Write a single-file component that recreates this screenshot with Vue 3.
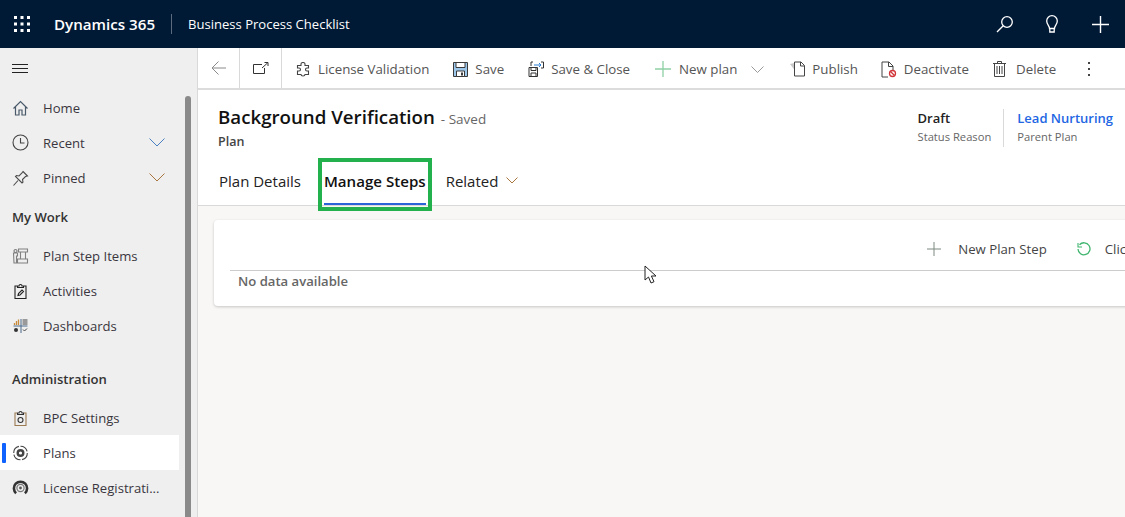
<script setup>
const dots = [[0,0],[6.5,0],[13,0],[0,6.5],[6.5,6.5],[13,6.5],[0,13],[6.5,13],[13,13]]
</script>

<template>
  <div class="app">
    <header class="top">
      <svg class="waffle" width="16" height="16" viewBox="0 0 16 16" fill="#fff">
        <rect v-for="p in dots" :key="p.join()" :x="p[0]" :y="p[1]" width="3" height="3" />
      </svg>
      <span class="brand">Dynamics 365</span>
      <span class="topsep"></span>
      <span class="appname">Business Process Checklist</span>
      <span class="grow"></span>
      <svg class="ti" width="18" height="18" viewBox="0 0 18 18" fill="none" stroke="#fff" stroke-width="1.3"><circle cx="11" cy="7" r="5.3" /><path d="M7.2 10.8 1 17" /></svg>
      <svg class="ti t2" width="18" height="20" viewBox="0 0 18 20" fill="none" stroke="#fff" stroke-width="1.3"><path d="M6.500 14.500c0-3-2.800-4-2.800-7.500a5.300 5.300 0 0 1 10.600 0c0 3.500-2.800 4.500-2.800 7.500z" /><path d="M6.800 14.500v3.500h4.400v-3.500" /></svg>
      <svg class="ti t3" width="17" height="17" viewBox="0 0 17 17" stroke="#fff" stroke-width="1.4"><path d="M8.500 0v17M0 8.500h17" /></svg>
    </header>

    <div class="main">
      <aside class="side">
        <div class="burger"><svg width="16" height="10" viewBox="0 0 16 10" stroke="#222" stroke-width="1"><path d="M0 .5h16M0 4.500h16M0 8.500h16" /></svg></div>
        <nav class="nav">
          <div class="row">
            <svg class="ni" width="16" height="16" viewBox="0 0 16 16" fill="none" stroke="#4a5a6a" stroke-width="1.200"><path d="M1 8.500 8 1.500l7 7M3 6.500V15h3.500v-5h3v5H13V6.500" /></svg>
            <span>Home</span>
          </div>
          <div class="row">
            <svg class="ni" width="17" height="17" viewBox="0 0 17 17" fill="none" stroke="#444" stroke-width="1.100"><circle cx="8.500" cy="8.500" r="7.500" /><path d="M8.500 4v5h4" /></svg>
            <span class="lbl">Recent</span>
            <svg class="chev" width="16" height="9" viewBox="0 0 16 9" fill="none" stroke="#4a7fc1" stroke-width="1"><path d="M.5.500 8 8l7.500-7.500" /></svg>
          </div>
          <div class="row">
            <svg class="ni" width="16" height="16" viewBox="0 0 16 16" fill="none" stroke="#4a4a4a" stroke-width="1.100"><path d="M10.500 1.500 15 6l-2 .500-3 3 .500 2.500-1 1-6.500-6.500 1-1 2.500.500 3-3zM5.500 10.500 1 15.500" /></svg>
            <span class="lbl">Pinned</span>
            <svg class="chev" width="16" height="9" viewBox="0 0 16 9" fill="none" stroke="#a8763e" stroke-width="1"><path d="M.5.500 8 8l7.500-7.500" /></svg>
          </div>

          <div class="head h1">My Work</div>
          <div class="row">
            <svg class="ni" width="16" height="16" viewBox="0 0 16 16" fill="none" stroke="#808080" stroke-width="1.100"><path d="M6 1h9v3H6zM8 4v7M13 4v7M5 11h10v4H5zM3 1.500a1.500 1.500 0 1 0 .01 0M1 5h4v3H4v7H1.500z" /></svg>
            <span>Plan Step Items</span>
          </div>
          <div class="row">
            <svg class="ni" width="16" height="16" viewBox="0 0 16 16" fill="none" stroke="#222" stroke-width="1.100"><path d="M4.500 3H2.500v12.500h11V3h-2M5 4.500V3h1.500a1.500 1.500 0 0 1 3 0H11v1.500zM5.500 12.500l.500-2 3.500-3.500 1.500 1.500-3.500 3.500z" /></svg>
            <span>Activities</span>
          </div>
          <div class="row">
            <svg class="ni" width="16" height="16" viewBox="0 0 16 16" fill="none" stroke-width="1">
              <path d="M1 8h14M8.500 1v14" stroke="#4a6a8a" />
              <path d="M2 7V5M4 7V3M6 7V1.500" stroke="#c98a3c" stroke-width="1.300" />
              <path d="M10 2h5M10 4h5M10 6h5" stroke="#444" />
              <circle cx="3.500" cy="12" r="2" fill="#333" stroke="none" />
              <path d="M10.500 11.500l1.500 1.500 2.500-2.500" stroke="#444" />
            </svg>
            <span>Dashboards</span>
          </div>

          <div class="head h2">Administration</div>
          <div class="row">
            <svg class="ni" width="16" height="16" viewBox="0 0 16 16" fill="none" stroke="#5a5a5a" stroke-width="1.100"><path d="M4.500 3H2.500v12.500h11V3h-2" stroke="#9c7a52" /><path d="M5 4.500V3h1.500a1.500 1.500 0 0 1 3 0H11v1.500z" stroke="#333" /><circle cx="8" cy="10" r="2.500" stroke="#333" /></svg>
            <span>BPC Settings</span>
          </div>
          <div class="row active">
            <i class="mark"></i>
            <svg class="ni" width="16" height="16" viewBox="0 0 16 16" fill="none" stroke="#444"><circle cx="8" cy="8" r="6.800" stroke-width="1.100" stroke-dasharray="9 1.600" /><circle cx="8" cy="8" r="2.800" stroke-width="2.400" /></svg>
            <span>Plans</span>
          </div>
          <div class="row">
            <svg class="ni" width="16" height="16" viewBox="0 0 16 16" fill="none" stroke="#333"><path d="M3.600 13.200a6.600 6.600 0 1 1 8.800 0" stroke-width="2.600" /><circle cx="8" cy="8" r="3.600" stroke="#777" stroke-width="1.200" /><circle cx="8" cy="8" r="1.400" fill="#555" stroke="none" /></svg>
            <span class="clip">License Registrati...</span>
          </div>
        </nav>
        <div class="sbar"></div>
      </aside>

      <section class="content">
        <div class="toolbar">
          <div class="cell">
            <svg width="16" height="14" viewBox="0 0 16 14" fill="none" stroke="#8a8a8a" stroke-width="1"><path d="M15 7H1M7.500.500 1 7l6.500 6.500" /></svg>
          </div>
          <div class="cell">
            <svg width="16" height="12" viewBox="0 0 16 12" fill="none" stroke="#333" stroke-width="1"><path d="M9 2.500H.5v9h11V6" /><path d="M9 6l5.500-5M11.500.500h3.500v3.500" /></svg>
          </div>
          <div class="cmd first">
            <svg width="14" height="15" viewBox="0 0 14 15" fill="none" stroke="#444" stroke-width="1.100"><path d="M5 2a2 1.500 0 0 1 4 0v1.500h3.500V6H11a1.500 1.500 0 0 0 0 3h1.500v3.500H9a2 1.500 0 0 1-4 0H1.500V9H3a1.500 1.500 0 0 0 0-3H1.500V3.500H5z" /></svg>
            <span>License Validation</span>
          </div>
          <div class="cmd c-save">
            <svg width="15" height="15" viewBox="0 0 15 15"><path d="M.5.500h14v14H.5z" fill="#9cc6ea" stroke="#3a3a3a" /><path d="M3 .5h9v5H3zM3.500 9h8v5.500h-8z" fill="#fff" stroke="#3a3a3a" /><rect x="8" y="10.500" width="2" height="3" fill="#3a3a3a" /></svg>
            <span>Save</span>
          </div>
          <div class="cmd c-close">
            <svg width="16" height="16" viewBox="0 0 16 16" fill="none"><path d="M1 6.500h8.500v9H1z" fill="#fff" stroke="#333" /><path d="M3 6.500h5v3H3zM3 12h5v3.500H3z" stroke="#333" /><path d="M3 5V1h2M13 1h2.500v6H13" stroke="#333" /><path d="M6 4h7M11 2l2 2-2 2" stroke="#2b7cd3" /></svg>
            <span>Save &amp; Close</span>
          </div>
          <div class="cmd c-new">
            <svg width="16" height="16" viewBox="0 0 16 16" stroke="#8fd0a5" stroke-width="1.300"><path d="M8 0v16M0 8h16" /></svg>
            <span>New plan</span>
            <svg class="mini" width="13" height="7" viewBox="0 0 13 7" fill="none" stroke="#999" stroke-width="1"><path d="M.5.500l6 6 6-6" /></svg>
          </div>
          <div class="cmd c-pub">
            <svg width="16" height="16" viewBox="0 0 16 16" fill="none"><path d="M0 3l4.500-1v7z" fill="#c8c8c8" /><path d="M4.500 1h6.500l3.500 3.500V15h-10z" fill="#fff" stroke="#444" /><path d="M10.500 1v4h4" stroke="#444" /></svg>
            <span>Publish</span>
          </div>
          <div class="cmd c-de">
            <svg width="16" height="17" viewBox="0 0 16 17" fill="none"><path d="M7 16H1V1h7l4 4v4" stroke="#444" /><path d="M7.500 1v4.500H12" stroke="#444" /><circle cx="11.500" cy="12.500" r="3" stroke="#d13438" stroke-width="1.300" /><path d="M9.500 10.500l4 4" stroke="#d13438" stroke-width="1.300" /></svg>
            <span>Deactivate</span>
          </div>
          <div class="cmd c-del">
            <svg width="13" height="16" viewBox="0 0 13 16" fill="none" stroke="#444" stroke-width="1"><path d="M0 2.500h13M4.500 2.500V.5h4v2M1.500 2.500v13h10v-13M4 5v8M6.500 5v8M9 5v8" /></svg>
            <span>Delete</span>
          </div>
          <div class="more"><i></i><i></i><i></i></div>
        </div>

        <div class="form-head">
          <div class="title-wrap">
            <div class="title-line"><h1>Background Verification</h1><span class="saved">- Saved</span></div>
            <div class="entity">Plan</div>
          </div>
          <div class="meta">
            <div class="mi"><b>Draft</b><small>Status Reason</small></div>
            <div class="mi m2"><a>Lead Nurturing</a><small>Parent Plan</small></div>
          </div>
        </div>

        <div class="tabs">
          <div class="tab">Plan Details</div>
          <div class="tab on">Manage Steps</div>
          <div class="tab rel">Related
            <svg width="12" height="7" viewBox="0 0 12 7" fill="none" stroke="#a8763e" stroke-width="1"><path d="M.5.500 6 6 11.500.500" /></svg>
          </div>
        </div>

        <div class="canvas">
          <div class="card">
            <div class="card-bar">
              <div class="act">
                <svg width="14" height="14" viewBox="0 0 14 14" stroke="#7d8a80" stroke-width="1"><path d="M7 0v14M0 7h14" /></svg>
                <span>New Plan Step</span>
              </div>
              <div class="act a2">
                <svg width="16" height="16" viewBox="0 0 16 16" fill="none" stroke="#3fb56e" stroke-width="1.300"><path d="M3.500 3.800A6 6 0 1 1 2 8" /><path d="M2 2v4h4" stroke-width="1.100" /></svg>
                <span>Click</span>
              </div>
            </div>
            <div class="empty">No data available</div>
          </div>
        </div>
      </section>
    </div>

    <svg class="cursor" width="13" height="20" viewBox="0 0 13 20"><path d="M1 1v14l3.500-3 2.500 6 3-1.300-2.600-5.700H12z" fill="#fff" stroke="#222" stroke-width="1" /></svg>
  </div>
</template>

<style>
html, body { margin: 0; background: #fff; overflow: hidden; }
</style>

<style scoped>
.app { width: 1125px; height: 517px; position: relative; overflow: hidden; font-family: "Open Sans", "Noto Sans", sans-serif; font-size: 13.1px; color: #333; }
.top { height: 48px; background: #001a36; display: flex; align-items: center; color: #fff; }
.waffle { margin-left: 14px; }
.brand { margin-left: 24px; font-size: 15.15px; font-weight: 600; }
.topsep { width: 1px; height: 20px; background: #5c6b7d; margin-left: 16px; }
.appname { margin-left: 16px; font-size: 13.05px; }
.grow { flex: 1; }
.ti { flex: none; }
.t2 { margin-left: 29px; }
.t3 { margin-left: 31px; margin-right: 16px; }
.main { display: flex; height: 469px; }
.side { width: 197px; flex: none; background: #efefef; border-right: 1px solid #d9d9d9; position: relative; overflow: hidden; }
.burger { height: 41px; display: flex; align-items: center; padding-left: 12px; }
.nav { padding-top: 1px; width: 179px; }
.row { height: 35px; display: flex; align-items: center; position: relative; padding-left: 12px; color: #3a3640; }
.ni { flex: none; width: 17px; margin-right: 14px; }
.lbl { flex: 1; }
.chev { margin-right: 14px; }
.head { font-weight: 600; padding-left: 12px; color: #333; line-height: 20px; }
.h1 { margin: 12px 0 11px; }
.h2 { margin: 26px 0 11px; }
.active { background: #fff; }
.mark { position: absolute; left: 2px; top: 8px; width: 4px; height: 20px; background: #0f62fe; border-radius: 1px; }
.clip { white-space: nowrap; }
.sbar { position: absolute; left: 185px; top: 48px; bottom: 0; width: 6px; background: #8a8a8a; border-radius: 3px 3px 0 0; }
.content { flex: 1; min-width: 0; display: flex; flex-direction: column; }
.toolbar { height: 42px; box-sizing: border-box; flex: none; border-bottom: 2px solid #dcdcdc; display: flex; align-items: center; color: #555; font-size: 13.3px; }
.cell { width: 41px; height: 40px; border-right: 1px solid #d9d9d9; display: flex; align-items: center; justify-content: center; flex: none; }
.cmd { display: flex; align-items: center; gap: 7px; white-space: nowrap; flex: none; padding-top: 2px; }
.first { margin-left: 14px; gap: 8px; }
.c-save { margin-left: 24px; }
.c-close { margin-left: 24px; }
.c-new { margin-left: 25px; gap: 8px; }
.mini { margin-left: 6px; }
.c-pub { margin-left: 26px; gap: 6px; }
.c-de { margin-left: 23px; }
.c-del { margin-left: 24px; gap: 10px; }
.more { margin-left: 32px; display: flex; flex-direction: column; gap: 4px; padding-top: 2px; }
.more i { display: block; width: 2px; height: 2px; background: #444; }
.form-head { display: flex; justify-content: space-between; height: 67px; padding: 13px 12px 0 20px; box-sizing: border-box; flex: none; }
.title-line { display: flex; align-items: baseline; }
h1 { margin: 0; font-size: 18.7px; line-height: 27px; font-weight: 600; color: #111; }
.saved { margin-left: 6px; color: #666; font-size: 13.5px; }
.entity { margin-top: 3px; font-weight: 600; font-size: 12.5px; color: #444; }
.meta { display: flex; margin-top: 6px; height: 38px; }
.mi { display: flex; flex-direction: column; padding: 0 12px 0 0; }
.mi b { font-weight: 600; font-size: 13px; color: #222; line-height: 18px; }
.mi a { font-weight: 600; font-size: 13px; color: #2266e3; line-height: 18px; }
.mi small { font-size: 11.2px; color: #666; line-height: 20px; }
.m2 { border-left: 1px solid #d9d9d9; padding: 0 0 0 13px; }
.tabs { height: 49px; flex: none; display: flex; padding-left: 21px; border-bottom: 1px solid #d9d9d9; font-size: 15px; color: #222; box-sizing: border-box; }
.tab { height: 48px; display: flex; align-items: center; padding-bottom: 1px; box-sizing: border-box; white-space: nowrap; margin-right: 20px; gap: 8px; }
.tab:first-child { margin-right: 23px; }
.on { font-weight: 600; position: relative; color: #111; font-size: 15.1px; }
.on::after { content: ""; position: absolute; left: 0; right: 0; bottom: 0; height: 2px; background: #2b63d9; }
.on::before { content: ""; position: absolute; left: -6px; right: -6px; top: 1px; bottom: -6px; border: 4px solid #22b14c; box-sizing: border-box; }
.canvas { flex: 1; background: #f8f7f6; padding: 14px 0 0 16px; overflow: hidden; }
.card { width: 940px; height: 86px; background: #fff; border-radius: 4px; box-shadow: 0 1px 3px rgba(0, 0, 0, .2); padding: 0 0 0 16px; box-sizing: border-box; }
.card-bar { height: 51px; border-bottom: 1px solid #ccc; display: flex; justify-content: flex-end; align-items: center; padding-top: 8px; box-sizing: border-box; color: #444; font-size: 13.2px; }
.act { display: flex; align-items: center; gap: 17px; white-space: nowrap; }
.a2 { margin-left: 29px; gap: 13px; margin-right: 21px; }
.empty { padding: 1px 0 0 8px; font-weight: 600; color: #666; line-height: 18px; }
.cursor { position: absolute; left: 644px; top: 265px; }
</style>
